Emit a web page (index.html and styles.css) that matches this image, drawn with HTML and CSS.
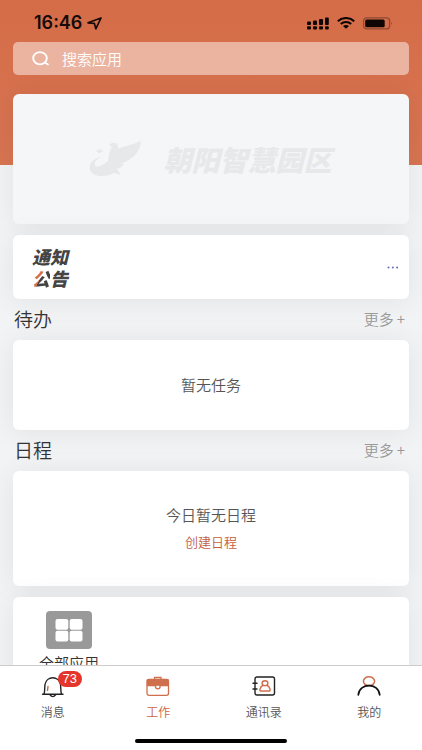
FILE: index.html
```html
<!DOCTYPE html>
<html lang="zh-CN">
<head>
<meta charset="utf-8">
<meta name="viewport" content="width=device-width, initial-scale=1">
<title>工作</title>
<link rel="stylesheet" href="styles.css">
</head>
<body>
<div class="app">
  <header class="status">
    <div class="status-left">
      <span class="time">16:46</span>
      <svg width="15" height="13" viewBox="0 0 15 13" fill="none" stroke="#160b08" stroke-width="1.7" stroke-linejoin="round"><path d="M1 5.800 14 1 8.800 11.800 7.400 6.400Z"/></svg>
    </div>
    <div class="status-right">
      <svg width="22" height="13" viewBox="0 0 22 13" fill="#0d0605"><rect x="0" y="4.4" width="4" height="3.6" rx="1"/><rect x="6" y="3.4" width="4" height="4.6" rx="1"/><rect x="12" y="2" width="4" height="6" rx="1"/><rect x="18" y="0.4" width="3.8" height="7.6" rx="1"/><rect x="0" y="9.2" width="4" height="3.2" rx="1"/><rect x="6" y="9.2" width="4" height="3.2" rx="1"/><rect x="12" y="9.2" width="4" height="3.2" rx="1"/><rect x="18" y="9.2" width="3.8" height="3.2" rx="1"/></svg>
      <svg width="18" height="12" viewBox="0 0 18 12" fill="none" stroke="#0d0605" stroke-width="2"><path d="M0.8 4.2C5.2-.1 12.8-.1 17.2 4.2M3.8 7C6.7 4.300 11.300 4.300 14.200 7"/><path d="M6 9.100C7.500 7.700 10.500 7.700 12 9.100L9 11.800Z" fill="#0d0605" stroke="none"/></svg>
      <svg width="30" height="13" viewBox="0 0 30 13"><rect x="0.600" y="0.900" width="26" height="11" rx="3" fill="none" stroke="#8d4a33" stroke-width="1.200"/><rect x="2.200" y="2.500" width="19.500" height="7.800" rx="1.500" fill="#0d0605"/><path d="M28 4.600q1.800 1.800 0 3.700z" fill="#8d4a33"/></svg>
    </div>
  </header>

  <main class="content">
    <label class="search">
      <svg width="18" height="15" viewBox="0 0 18 15" fill="none" stroke="#fff" stroke-width="1.800" stroke-linecap="round"><ellipse cx="8" cy="7.200" rx="6.800" ry="6.100"/><path d="m13 11.500 3 2"/></svg>
      <input type="search" placeholder="搜索应用" aria-label="搜索应用">
    </label>

    <section class="card banner">
      <svg width="54" height="36" viewBox="0 0 54 36" fill="#e7e8ea"><path d="M51 0C42 4 34 5 28 8C29 4 26 1 22 2L19 4L22 6C19 10 19 15 18 20C13 24 6 28 5 24C4 20 8 17 12 16C4 16-2 23 0 29C3 37 17 36 24 32L31 34L27 28C30 27 33 25 34 23L30 23C43 19 50 11 51 0Z"/><path d="m10 7 1 2 3 1-3 1-2 2-1-2-3-1 4-1z"/></svg>
      <span class="banner-name">朝阳智慧园区</span>
    </section>

    <section class="card notice">
      <h2 class="notice-title"><span>通知</span><span><span class="accent">公</span>告</span></h2>
      <a href="#notices" class="dots" aria-label="全部公告"><svg width="12" height="3" viewBox="0 0 12 3" fill="#6a6ca8"><circle cx="1.500" cy="1.500" r="1"/><circle cx="5.800" cy="1.500" r="1"/><circle cx="10.100" cy="1.500" r="1"/></svg></a>
    </section>

    <div class="heading"><h2>待办</h2><a href="#todo">更多<span class="plus">+</span></a></div>
    <section class="card todo"><p>暂无任务</p></section>

    <div class="heading"><h2>日程</h2><a href="#schedule">更多<span class="plus">+</span></a></div>
    <section class="card schedule"><p>今日暂无日程</p><a href="#create">创建日程</a></section>

    <section class="card apps">
      <a href="#apps" class="app-item">
        <svg width="46" height="38" viewBox="0 0 46 38"><rect width="46" height="38" rx="4" fill="#999"/><g fill="#fff"><rect x="9.500" y="8" width="12.800" height="10.800" rx="2"/><rect x="23.700" y="8" width="12.800" height="10.800" rx="2"/><rect x="9.500" y="19.800" width="12.800" height="10.800" rx="2"/><rect x="23.700" y="19.800" width="12.800" height="10.800" rx="2"/></g></svg>
        <span>全部应用</span>
      </a>
    </section>
  </main>

  <nav class="tabs">
    <a href="#messages" class="tab">
      <span class="tab-icon">
        <svg width="24" height="22" viewBox="0 0 24 22" fill="none" stroke="#222" stroke-width="1.400" stroke-linecap="round"><path d="M1.500 18.300H22M3 18.300C4 15 3.500 12 4 8.500C5.500-.5 18-.5 19.500 8.500C20 12 19.500 15 20.500 18.300"/><path d="M9 18.800q2.800 3.600 5.600 0"/><path d="M7 10.500l-.5 4" stroke="#c9694c"/></svg>
        <span class="badge">73</span>
      </span>
      <span>消息</span>
    </a>
    <a href="#work" class="tab active" aria-current="page">
      <span class="tab-icon"><svg width="24" height="22" viewBox="0 0 24 22" fill="none" stroke="#cf6f4d" stroke-width="1.300"><rect x="1" y="3.500" width="21.500" height="15.800" rx="2"/><path d="M1.500 4h20.500v5.500H1.500z" fill="#cf6f4d"/><path d="M8.500 3.500v-2h6.500v2"/><path d="M9.500 9.200v1q0 2.600 2.300 2.600t2.300-2.600v-1z" fill="#fff"/></svg></span>
      <span>工作</span>
    </a>
    <a href="#contacts" class="tab">
      <span class="tab-icon"><svg width="24" height="22" viewBox="0 0 24 22" fill="none" stroke="#222" stroke-width="1.400" stroke-linecap="round"><rect x="3" y="1" width="19.500" height="18" rx="2"/><path d="M1 7.200h4M1 13h4"/><g stroke="#cf6f4d"><ellipse cx="13" cy="7.200" rx="2.900" ry="2.400"/><path d="M10.800 9.500C8 10.600 7.300 15 8.300 15H17.700C18.700 15 18 10.600 15.200 9.500"/></g></svg></span>
      <span>通讯录</span>
    </a>
    <a href="#me" class="tab">
      <span class="tab-icon"><svg width="24" height="22" viewBox="0 0 24 22" fill="none" stroke-width="1.500" stroke-linecap="round"><ellipse cx="12" cy="5.200" rx="5.600" ry="4.400" stroke="#cf6f4d"/><path d="M1.300 18.800C2.500 6.500 21.500 6.500 22.700 18.800" stroke="#111" stroke-width="1.700"/></svg></span>
      <span>我的</span>
    </a>
  </nav>
  <div class="home-bar"><span></span></div>
</div>
</body>
</html>
```
FILE: styles.css
```css
* { box-sizing: border-box; }

body {
  margin: 0;
  font-family: "Noto Sans CJK SC", sans-serif;
  font-size: 15px;
  font-weight: 350;
  line-height: 20px;
  color: #333;
}

h2, p { margin: 0; font-weight: inherit; }
a { color: inherit; text-decoration: none; }
svg { display: block; flex: none; }

.app {
  display: flex;
  flex-direction: column;
  height: 100vh;
  background: linear-gradient(#d56c48, #d87552) no-repeat top / 100% 165px #f2f3f5;
}

.status {
  display: flex;
  justify-content: space-between;
  align-items: center;
  padding: 13px 29px 8px 34px;
}

.status-left, .status-right { display: flex; align-items: center; }
.status-left { gap: 5px; }
.status-right { gap: 8px; }

.time {
  font: 600 18px/20px Inter, sans-serif;
  color: #160b08;
}

.content {
  flex: 1;
  min-height: 0;
  overflow: hidden;
  padding: 1px 13px 0;
}

.search {
  display: flex;
  align-items: center;
  gap: 12px;
  height: 33px;
  padding: 0 19px;
  border-radius: 5px;
  background: rgba(255, 255, 255, .48);
}

.search input {
  flex: 1;
  min-width: 0;
  height: 20px;
  padding: 0;
  border: 0;
  outline: 0;
  background: none;
  font: inherit;
  color: #fff;
}

.search input::placeholder { color: #fff; opacity: 1; }

.card {
  border-radius: 6px;
  background: #fff;
  box-shadow: 0 2px 28px rgba(0, 0, 0, .07);
}

.banner {
  display: flex;
  align-items: center;
  justify-content: center;
  gap: 19px;
  height: 130px;
  margin-top: 19px;
  background: #f5f6f8;
}

.banner-name {
  font-size: 28px;
  line-height: 32px;
  font-weight: 900;
  font-style: italic;
  color: #e7e8ea;
}

.notice {
  display: flex;
  align-items: center;
  justify-content: space-between;
  height: 64px;
  margin-top: 11px;
  padding: 0 10px 0 19px;
}

.notice-title {
  display: flex;
  flex-direction: column;
  font-size: 18px;
  line-height: 22px;
  font-weight: 900;
  font-style: italic;
  color: #444;
}

.accent {
  background: linear-gradient(115deg, #d96f4a 48%, #444 48%);
  -webkit-background-clip: text;
  background-clip: text;
  color: transparent;
}

.heading {
  display: flex;
  align-items: center;
  justify-content: space-between;
  height: 41px;
  padding: 0 4px 2px 1px;
}

.heading h2 { font-size: 19px; }
.heading a { color: #999; font-size: 15px; }
.plus { margin-left: 3px; }

.todo, .schedule {
  display: flex;
  flex-direction: column;
  align-items: center;
  justify-content: center;
  color: #555;
}

.todo { height: 90px; }
.schedule { height: 115px; gap: 7px; }
.schedule a { font-size: 13px; color: #c4603f; }

.apps {
  display: flex;
  height: 130px;
  margin-top: 11px;
  padding: 14px 26px;
}

.app-item {
  display: flex;
  flex-direction: column;
  align-items: center;
  gap: 4px;
  height: 64px;
}

.tabs {
  display: flex;
  position: relative;
  border-top: 1px solid #ccc;
  padding-top: 10px;
  background: #fff;
}

.tab {
  flex: 1;
  display: flex;
  flex-direction: column;
  align-items: center;
  gap: 4px;
  font-size: 12px;
  color: #555;
}

.tab.active { color: #c9633f; }
.tab-icon { position: relative; }

.badge {
  position: absolute;
  top: -5px;
  left: 17px;
  width: 24px;
  border-radius: 8px;
  background: #e5352b;
  color: #fff;
  font: 13px/16px "Liberation Sans", sans-serif;
  text-align: center;
}

.home-bar {
  display: flex;
  justify-content: center;
  padding: 11px 0 10px;
  background: #fff;
  height: 28px;
}

.home-bar span {
  width: 36%;
  height: 4px;
  margin-top: 6px;
  border-radius: 2px;
  background: #000;
}
```
